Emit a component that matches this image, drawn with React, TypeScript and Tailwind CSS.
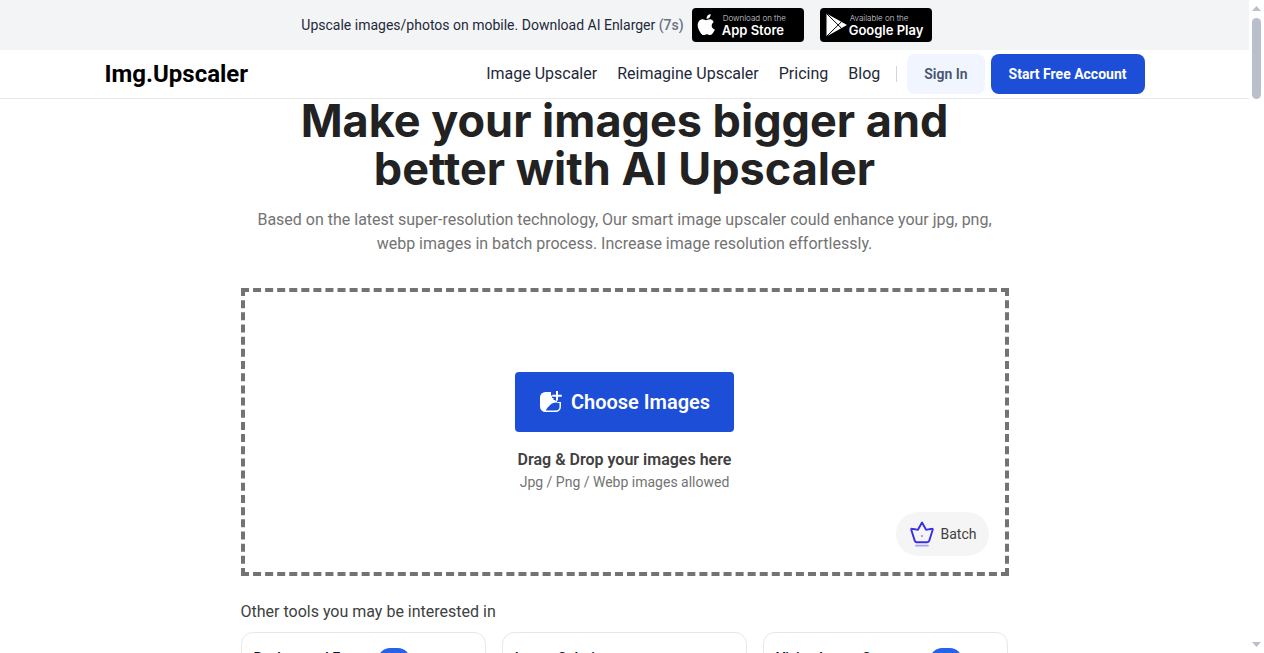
import type { ReactNode } from 'react';

const navLinks = ['Image Upscaler', 'Reimagine Upscaler', 'Pricing', 'Blog'];

const tools = [
  { name: 'Background Eraser', isNew: true, text: 'Remove the background in seconds.' },
  { name: 'Image Colorizer', isNew: false, text: 'Bring old photos to life with color.' },
  { name: 'Vision Image Generator', isNew: true, text: 'Create images from your words.' },
];

function StoreBadge({ icon, top, name, flush }: { icon: ReactNode; top: string; name: string; flush?: boolean }) {
  return (
    <a
      href="#"
      className={`flex h-[34px] w-28 items-center rounded bg-black pl-[5px] text-white ${flush ? 'gap-0' : 'gap-[5px]'}`}
    >
      {icon}
      <span className="flex flex-col whitespace-nowrap pb-px font-['Inter',sans-serif]">
        <span className="pl-px text-[8px] leading-[10px] font-light text-gray-300">{top}</span>
        <span className="text-[13px] leading-[14px] font-semibold">{name}</span>
      </span>
    </a>
  );
}

function AppleIcon() {
  return (
    <svg width="20" height="24" viewBox="0 0 20 24" fill="white" aria-hidden="true">
      <path d="M13.600 1c.2 1.300-.3 2.500-1 3.400-.8.900-1.900 1.500-3 1.400-.2-1.200.4-2.400 1-3.200C11.400 1.700 12.600 1.100 13.600 1z" />
      <path d="M16.700 9.200c-.3.200-2 1.200-2 3.500 0 2.700 2.700 3.700 3.200 3.800 0 .1-.5 1.500-1.500 2.800-.9 1.300-1.800 2.800-3.200 2.800-1.300 0-1.700-.8-3.300-.8s-2.100.8-3.300.8c-1.400 0-2.400-1.300-3.300-2.700C1.900 17.500.7 15 .7 12.300c0-3.900 2.500-6 5-6 1.400 0 2.500.9 3.400.9s2.200-1 3.800-1c.7 0 2.700.1 3.800 3z" />
    </svg>
  );
}

function PlayIcon() {
  return (
    <svg width="24" height="26" viewBox="0 0 24 26" fill="white" aria-hidden="true">
      <path d="M1.500 1.500 22 13 1.500 24.500z" />
      <path d="M1.500 1.500 16.500 16.300M1.500 24.500 16.500 9.700" stroke="black" strokeWidth="1" />
    </svg>
  );
}

function AddImageIcon() {
  return (
    <svg width="24" height="24" viewBox="0 0 24 24" fill="none" aria-hidden="true">
      <path
        d="M6.500 2H12v3.500h2.500V10H18V12h4v4.500a5.500 5.500 0 0 1-5.500 5.500h-10A5.500 5.500 0 0 1 1 16.500v-9A5.500 5.500 0 0 1 6.500 2z"
        fill="white"
      />
      <path d="M7 19.800c2.200-3 4.500-5.600 7.200-6.700 2-.8 4-.7 6.300.2V16.500a4 4 0 0 1-4 4H7.300z" fill="#1d4ed8" />
      <path d="M18 .8v9.800M13 5.700h10" stroke="#1d4ed8" strokeWidth="4.500" />
      <path d="M18 1v9.500M13.200 5.700h9.600" stroke="white" strokeWidth="2" />
    </svg>
  );
}

function CrownIcon() {
  return (
    <svg width="24" height="26" viewBox="0 0 24 26" fill="none" aria-hidden="true">
      <path
        d="M12 1.500 8.200 8.300c-.2.400-.7.500-1.100.3L1.800 7.800c-.5-.1-.7.300-.6.700L4.700 19.600c.3 1 1 1.600 2 1.600h10.600c1 0 1.700-.6 2-1.600l3.500-11.100c.1-.4-.1-.8-.6-.7l-5.300.8c-.4.200-.9.100-1.100-.3z"
        stroke="#3730e8"
        strokeWidth="1.900"
        strokeLinejoin="round"
      />
      <circle cx="12" cy="15" r="1.200" fill="#a5a2f5" />
      <path d="M6 24.700h12" stroke="#a5a2f5" strokeWidth="1.700" strokeLinecap="round" />
    </svg>
  );
}

export default function App() {
  return (
    <div className="flex h-screen bg-white font-['Roboto',sans-serif]">
      <div className="min-w-0 flex-1 overflow-hidden">
        <div className="flex h-[50px] items-center justify-center bg-gray-100 pr-4 text-sm text-gray-800">
          <p>
            Upscale images/photos on mobile. Download AI Enlarger{' '}
            <span className="font-medium text-gray-500">(7s)</span>
          </p>
          <div className="ml-2 flex gap-4">
            <StoreBadge icon={<AppleIcon />} top="Download on the" name="App Store" />
            <StoreBadge icon={<PlayIcon />} top="Available on the" name="Google Play" flush />
          </div>
        </div>

        <header className="border-b border-gray-200 bg-white">
          <div className="mx-auto flex h-12 max-w-[1040px] items-center">
            <a href="#" className="text-2xl font-bold text-black">Img.Upscaler</a>
            <nav className="ml-auto flex items-center gap-5 text-base text-gray-800">
              {navLinks.map((link) => (
                <a key={link} href="#">{link}</a>
              ))}
            </nav>
            <span className="ml-4 mr-2.5 h-4 w-px bg-gray-300" />
            <button type="button" className="h-10 rounded-lg bg-[#f1f5ff] px-[17px] text-sm font-semibold text-slate-600">
              Sign In
            </button>
            <button type="button" className="ml-1.5 h-10 rounded-lg bg-[#1d4ed8] px-[18px] text-sm font-bold text-white">
              Start Free Account
            </button>
          </div>
        </header>

        <main className="mx-auto -mt-0.5 max-w-3xl">
          <h1 className="text-center font-['Inter',sans-serif] text-[45px] leading-[48px] font-bold text-[#222]">
            Make your images bigger and
            <br />
            better with AI Upscaler
          </h1>
          <p className="mt-[15px] text-center text-base leading-6 text-[#737373]">
            Based on the latest super-resolution technology, Our smart image upscaler could enhance your jpg, png,
            <br />
            webp images in batch process. Increase image resolution effortlessly.
          </p>

          <section className="relative mt-8 flex h-72 flex-col items-center border-4 border-dashed border-[#737373] pt-20">
            <button
              type="button"
              className="flex h-[60px] items-center gap-2 rounded bg-[#1d4ed8] px-6 text-xl font-semibold text-white"
            >
              <AddImageIcon />
              Choose Images
            </button>
            <p className="mt-4 text-base leading-6 font-semibold text-[#404040]">Drag &amp; Drop your images here</p>
            <p className="text-sm leading-5 text-[#737373]">Jpg / Png / Webp images allowed</p>
            <div className="absolute right-4 bottom-4 flex h-11 items-center gap-[7px] rounded-full bg-neutral-100 pr-3 pl-3.5 text-sm text-[#404040]">
              <CrownIcon />
              Batch
            </div>
          </section>

          <h2 className="mt-6 text-base leading-6 text-[#404040]">Other tools you may be interested in</h2>
          <div className="mt-2 grid grid-cols-3 gap-4">
            {tools.map((tool) => (
              <a key={tool.name} href="#" className="rounded-xl border border-gray-200 px-3 py-[15px] text-gray-900">
                <span className="flex items-start gap-1.5">
                  <span className="text-sm font-semibold">{tool.name}</span>
                  {tool.isNew && (
                    <span className="rounded-full bg-[#2563eb] px-1.5 pt-1.5 pb-0.5 text-[10px] leading-4 text-white">New</span>
                  )}
                </span>
                <span className="mt-1 block text-sm text-gray-500">{tool.text}</span>
              </a>
            ))}
          </div>
        </main>
      </div>

      <div className="flex w-[15px] flex-col items-center bg-white pt-1.5 pb-1.5" aria-hidden="true">
        <svg width="9" height="5" viewBox="0 0 9 5" fill="#b9c0cb"><path d="M4.500 0 9 5H0z" /></svg>
        <span className="mt-[7px] h-[81px] w-[9px] rounded-full bg-[#b9c0cb]" />
        <svg className="mt-auto" width="9" height="5" viewBox="0 0 9 5" fill="#b9c0cb"><path d="M4.500 5 9 0H0z" /></svg>
      </div>
    </div>
  );
}
